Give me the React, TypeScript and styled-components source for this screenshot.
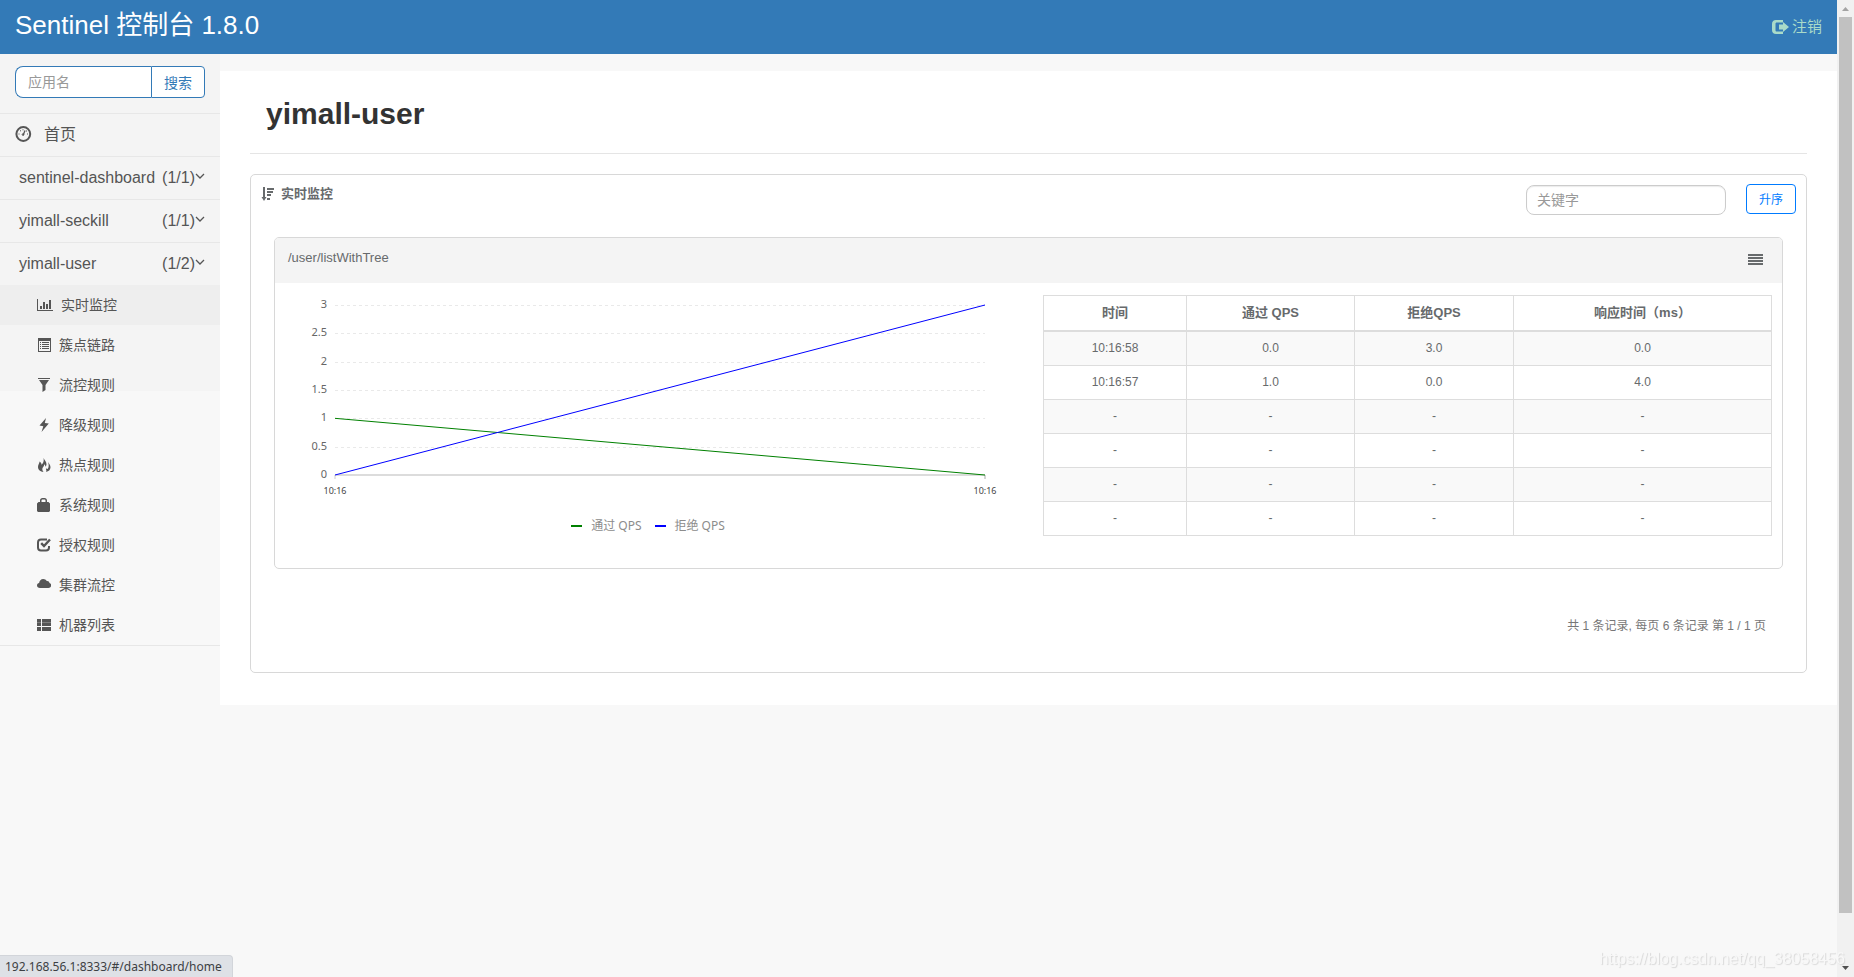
import React from 'react';
import styled, { createGlobalStyle } from 'styled-components';

const GlobalStyle = createGlobalStyle`
  *, *::before, *::after { box-sizing: border-box; }
  body {
    margin: 0;
    background: #f8f8f8;
    color: #676a6c;
    font-family: "Liberation Sans", "Noto Sans CJK SC", sans-serif;
    font-size: 14px;
  }
  button, input { font-family: inherit; }
  a { color: inherit; text-decoration: none; }
  ul { list-style: none; margin: 0; padding: 0; }
`;

const Shell = styled.div`
  display: flex;
  min-height: 100vh;
`;

const Page = styled.div`
  flex: 1;
  min-width: 0;
`;

const TopBar = styled.header`
  display: flex;
  justify-content: space-between;
  align-items: flex-start;
  height: 54px;
  padding: 0 15px;
  background: #337ab7;
`;

const Brand = styled.a`
  color: #fff;
  font-size: 26px;
  line-height: 50px;
`;

const Logout = styled.a`
  display: flex;
  align-items: center;
  gap: 3px;
  color: #a9dbc9;
  font-size: 15px;
  line-height: 54px;
`;

const Columns = styled.div`
  display: flex;
  align-items: flex-start;
`;

const Sidebar = styled.nav`
  width: 220px;
  flex: none;
  color: #555;
  background: linear-gradient(#f4f4f4 337px, #f8f8f8 337px);
`;

const SearchForm = styled.form`
  display: flex;
  padding: 12px 15px 15px;
  border-bottom: 1px solid #e7e7e7;
`;

const SearchInput = styled.input`
  flex: 1;
  min-width: 0;
  height: 32px;
  padding: 0 12px;
  border: 1px solid #337ab7;
  border-right: 0;
  border-radius: 8px 0 0 8px;
  background: #fff;
  font-size: 14px;
  outline: none;
  &::placeholder { color: #999; }
`;

const SearchButton = styled.button`
  width: 54px;
  height: 32px;
  padding: 0;
  border: 1px solid #337ab7;
  border-radius: 0 4px 4px 0;
  background: #fff;
  color: #337ab7;
  font-size: 14px;
`;

const NavItem = styled.li`
  border-bottom: 1px solid #e7e7e7;
`;

const HomeLink = styled.a`
  display: flex;
  align-items: center;
  gap: 12px;
  height: 42px;
  padding: 0 15px 2px;
  font-size: 16px;
`;

const NavLabel = styled.span`
  padding-bottom: 2px;
`;

const AppLink = styled.a`
  display: flex;
  align-items: center;
  height: 42px;
  padding: 0 15px 0 19px;
  font-size: 16px;
`;

const AppCount = styled.span`
  margin-left: auto;
`;

const RuleLink = styled.a<{ $active?: boolean }>`
  display: flex;
  align-items: center;
  gap: 8px;
  height: 40px;
  padding-left: 37px;
  font-size: 14px;
  background: ${p => (p.$active ? '#eee' : 'transparent')};
`;

const Content = styled.main`
  flex: 1;
  min-width: 0;
  margin-top: 17px;
  padding: 22px 30px 32px;
  background: #fff;
`;

const Title = styled.h1`
  margin: 0 0 20px;
  padding: 0 16px 18px;
  border-bottom: 1px solid #e5e5e5;
  color: #333;
  font-size: 30px;
  line-height: 42px;
`;

const Card = styled.section`
  border: 1px solid #d8d8d8;
  border-radius: 5px;
`;

const CardHead = styled.div`
  display: flex;
  align-items: flex-start;
  gap: 20px;
  padding: 9px 10px 0;
`;

const CardTitle = styled.h2`
  display: flex;
  align-items: center;
  gap: 7px;
  margin: 0 auto 0 0;
  font-size: 13px;
  line-height: 20px;
`;

const KeywordInput = styled.input`
  width: 200px;
  height: 30px;
  margin-top: 1px;
  padding: 0 10px;
  border: 1px solid #ccc;
  border-radius: 8px;
  box-shadow: inset 0 1px 1px rgba(0, 0, 0, 0.08);
  font-size: 14px;
  outline: none;
  &::placeholder { color: #999; }
`;

const SortButton = styled.button`
  width: 50px;
  height: 30px;
  padding: 0 0 2px;
  border: 1px solid #007bff;
  border-radius: 4px;
  background: #fff;
  color: #007bff;
  font-size: 12px;
`;

const Resource = styled.section`
  margin: 22px 23px 0;
  border: 1px solid #d8d8d8;
  border-radius: 5px;
`;

const ResourceHead = styled.div`
  display: flex;
  justify-content: space-between;
  height: 45px;
  padding: 10px 19px 0 13px;
  border-radius: 4px 4px 0 0;
  background: #f4f4f4;
  font-size: 13px;
  line-height: 20px;
`;

const MenuButton = styled.button`
  display: flex;
  align-items: center;
  height: 22px;
  padding: 0;
  border: 0;
  background: none;
  color: inherit;
`;

const ResourceBody = styled.div`
  display: flex;
  align-items: flex-start;
  padding: 12px 10px 32px;
`;

const Chart = styled.figure`
  flex: 1;
  min-width: 0;
  margin: 0;
  padding: 10px 32px 0 0;
`;

const PlotArea = styled.div`
  padding: 0 26px 0 50px;
`;

const Plot = styled.svg`
  display: block;
  width: 100%;
  height: 205px;
  overflow: visible;
  font-family: "Noto Sans", sans-serif;
`;

const Legend = styled.figcaption`
  display: flex;
  justify-content: center;
  gap: 13px;
  margin-top: 8px;
  color: #8c8c8c;
  font-family: "Noto Sans", "Noto Sans CJK SC", sans-serif;
  font-size: 12px;
  line-height: 16px;
`;

const LegendItem = styled.span`
  display: flex;
  align-items: center;
  gap: 9px;
`;

const LegendMark = styled.i<{ $color: string }>`
  width: 11px;
  height: 2px;
  background: ${p => p.$color};
`;

const Metrics = styled.table`
  width: 49%;
  table-layout: fixed;
  border-collapse: collapse;
  font-size: 12px;
  text-align: center;
  th, td {
    padding: 8px;
    border: 1px solid #ddd;
    line-height: 17px;
  }
  th {
    border-bottom-width: 2px;
    font-size: 13px;
    line-height: 18px;
  }
  tbody tr:nth-child(odd) { background: #f9f9f9; }
`;

const Pager = styled.p`
  margin: 47px 40px 36px;
  color: #777;
  font-size: 12px;
  line-height: 20px;
  text-align: right;
`;

const ScrollTrack = styled.div`
  display: flex;
  flex-direction: column;
  align-items: center;
  width: 17px;
  background: #f1f1f1;
`;

const ScrollArrow = styled.svg`
  flex: none;
  width: 17px;
  height: 17px;
`;

const ScrollThumb = styled.div`
  flex: 95;
  width: 13px;
  background: #c1c1c1;
`;

const ScrollRest = styled.div`
  flex: 5;
`;

const StatusBubble = styled.div`
  position: fixed;
  left: 0;
  bottom: 0;
  height: 22px;
  padding: 0 10px 0 5px;
  border: 1px solid #d2d5da;
  border-width: 1px 1px 0 0;
  border-radius: 0 4px 0 0;
  background: #dee1e6;
  color: #3c4043;
  font-family: "Noto Sans", sans-serif;
  font-size: 12px;
  line-height: 22px;
`;

const Watermark = styled.div`
  position: fixed;
  right: 9px;
  bottom: 8px;
  color: #f8f8f8;
  font-size: 16px;
  line-height: 20px;
  text-shadow: 1px 1px 1px #d8d8d8;
`;

const icons: Record<string, React.ReactNode> = {
  chart: (
    <path d="M0 1h1v11h15v1H0zM3 8h2v3H3zM6 4h2v7H6zM9 6h2v5H9zM12 2h2v9h-2z" />
  ),
  list: (
    <path
      fillRule="evenodd"
      d="M1 0h13v14H1zM2 3v10h11V3zM3 4h1v1H3zM5 4h7v1H5zM3 6h1v1H3zM5 6h7v1H5zM3 8h1v1H3zM5 8h7v1H5zM3 10h1v1H3zM5 10h7v1H5z"
    />
  ),
  filter: <path d="M1 0h12v1H1zM2 2h10L8.500 7v5L5.500 14V7z" />,
  flash: <path d="M9 0 2.500 7.500 6.300 8.200 4.500 14 11.800 5.600 7.800 5z" />,
  fire: (
    <path d="M6.500 0c.8 2 3.300 3.800 3 6.500-.1 1-.5 1.800-1 2.300-.1-1.200-.5-2-1.300-2.600.2 2.300-2.200 3-1.900 5.300.1 1 .5 1.800 1.200 2.500C3.500 13.800 1 12 1 9c0-2.200 1.300-3.300 1.600-5.500C3.900 4.300 4.600 5.300 4.500 6.800 6.300 5.300 7.200 3 6.500 0zM11 4c.6 1.500 2.600 2.800 2.500 5.300-.1 2.600-1.800 4.200-4.500 4.700 1.200-1.500-.5-2.600 0-4.300.3 1 .9 1.300 1.500 1.300C12 9.500 12 6.500 11 4z" />
  ),
  lock: (
    <path
      fillRule="evenodd"
      d="M3 4V2.500C3 1 4 0 5.500 0h2C9 0 10 1 10 2.500V4h1.500L13 5.500V13l-1 1H1l-1-1V5.500L1.500 4zM4.500 4h4V2.500c0-.6-.4-1-1-1h-2c-.6 0-1 .4-1 1z"
    />
  ),
  check: (
    <g fill="none" stroke="currentColor" strokeWidth="2">
      <path d="M10 1.500H4C2.300 1.500 1 2.800 1 4.500v5C1 11.200 2.300 12.500 4 12.500h5c1.700 0 3-1.300 3-3V8" />
      <path d="M4.200 5.200 7 8l6-6.500" strokeWidth="2.400" />
    </g>
  ),
  cloud: (
    <path d="M3 10C1.200 10 0 9 0 7.500 0 6.200.9 5.300 2.100 5.100 2.300 2.800 4 1 6.200 1c1.600 0 2.900.8 3.600 2.100 1.500-.2 2.500.7 2.700 1.900 1 .3 1.700 1.200 1.700 2.300 0 1.500-1.200 2.700-2.700 2.700z" />
  ),
  table: (
    <>
      <path d="M0 1h4v3H0zM5 1h9v3H5zM0 5h4v3H0zM5 5h9v3H5zM0 9h4v4H0zM5 9h9v4H5z" />
      <path d="M0 4h4v1H0zM5 4h9v1H5z" opacity=".75" />
    </>
  ),
};

function RuleIcon({ name }: { name: string }) {
  const width = name === 'chart' ? 16 : 14;
  return (
    <svg width={width} height="14" viewBox={`0 0 ${width} 14`} fill="currentColor" aria-hidden="true">
      {icons[name]}
    </svg>
  );
}

function DashboardIcon() {
  return (
    <svg width="17" height="16" viewBox="0 0 17 16" fill="none" stroke="currentColor" aria-hidden="true">
      <circle cx="8.300" cy="8" r="6.900" strokeWidth="2" />
      <path d="M8 9.500 10 4.500" strokeWidth="1.300" />
      <path d="M3.500 8h1M12 8h1M5 4.800h1M7.500 3.800h1M11 5h1" />
      <circle cx="8" cy="8.500" r=".8" />
    </svg>
  );
}

function ChevronIcon() {
  return (
    <svg width="10" height="16" viewBox="0 0 10 16" fill="none" stroke="currentColor" strokeWidth="1.300" aria-hidden="true">
      <path d="M1 4 5 8 9 4" />
    </svg>
  );
}

function SortIcon() {
  return (
    <svg width="13" height="14" viewBox="0 0 13 14" fill="currentColor" aria-hidden="true">
      <path d="M2 0h2v10h1.500L3 14 .5 10H2zM6 1h7v2H6zM6 4h6v2H6zM6 7h4v2H6zM6 11h3v2H6z" />
    </svg>
  );
}

function LogoutIcon() {
  return (
    <svg width="17" height="14" viewBox="0 0 17 14" fill="currentColor" aria-hidden="true">
      <path d="M4 0h7v2.500H5C3.800 2.500 3.500 3 3.500 4v6c0 1 .3 1.500 1.500 1.500h6V14H4c-2.500 0-4-1.500-4-4V4c0-2.500 1.500-4 4-4z" />
      <path d="M11 2l6 5-6 5V9.500H7v-5h4z" />
    </svg>
  );
}

const apps = [
  { name: 'sentinel-dashboard', count: '(1/1)' },
  { name: 'yimall-seckill', count: '(1/1)' },
  { name: 'yimall-user', count: '(1/2)', open: true },
];

const rules = [
  ['chart', '实时监控'],
  ['list', '簇点链路'],
  ['filter', '流控规则'],
  ['flash', '降级规则'],
  ['fire', '热点规则'],
  ['lock', '系统规则'],
  ['check', '授权规则'],
  ['cloud', '集群流控'],
  ['table', '机器列表'],
];

const rows = [
  ['10:16:58', '0.0', '3.0', '0.0'],
  ['10:16:57', '1.0', '0.0', '4.0'],
  ['-', '-', '-', '-'],
  ['-', '-', '-', '-'],
  ['-', '-', '-', '-'],
  ['-', '-', '-', '-'],
];

const ticks = ['3', '2.5', '2', '1.5', '1', '0.5', '0'];
const PLOT_HEIGHT = 170;
const yOf = (value: number) => PLOT_HEIGHT - (value / 3) * PLOT_HEIGHT;

function QpsChart() {
  return (
    <Chart>
      <PlotArea>
        <Plot role="img" aria-label="QPS">
          {ticks.map(t => (
            <g key={t}>
              {t !== '0' && (
                <line
                  x1="0"
                  x2="100%"
                  y1={Math.round(yOf(+t)) + 0.5}
                  y2={Math.round(yOf(+t)) + 0.5}
                  stroke="#e9e9e9"
                  strokeDasharray="3 3"
                />
              )}
              <text x="-8" y={yOf(+t) + 3} textAnchor="end" fontSize="11" fill="#666">
                {t}
              </text>
            </g>
          ))}
          <line x1="0" x2="100%" y1="170" y2="170" stroke="#dcdcdc" strokeWidth="2" />
          <line x1="0" x2="0" y1="170" y2="174" stroke="#ccc" />
          <line x1="100%" x2="100%" y1="170" y2="174" stroke="#aaa" />
          <line x1="0" x2="100%" y1={yOf(1)} y2={yOf(0)} stroke="green" />
          <line x1="0" x2="100%" y1={yOf(0)} y2={yOf(3)} stroke="blue" />
          <text x="0" y="189" textAnchor="middle" fontSize="9" fill="#444">10:16</text>
          <text x="100%" y="189" textAnchor="middle" fontSize="9" fill="#444">10:16</text>
        </Plot>
      </PlotArea>
      <Legend>
        <LegendItem><LegendMark $color="green" />通过 QPS</LegendItem>
        <LegendItem><LegendMark $color="blue" />拒绝 QPS</LegendItem>
      </Legend>
    </Chart>
  );
}

export default function App() {
  return (
    <>
      <GlobalStyle />
      <Shell>
        <Page>
          <TopBar>
            <Brand href="#/dashboard/home">Sentinel 控制台 1.8.0</Brand>
            <Logout href="#/logout"><LogoutIcon />注销</Logout>
          </TopBar>
          <Columns>
            <Sidebar>
              <SearchForm onSubmit={e => e.preventDefault()}>
                <SearchInput type="text" placeholder="应用名" aria-label="应用名" />
                <SearchButton type="submit">搜索</SearchButton>
              </SearchForm>
              <ul>
                <NavItem>
                  <HomeLink href="#/dashboard/home">
                    <DashboardIcon />
                    <NavLabel>首页</NavLabel>
                  </HomeLink>
                </NavItem>
                {apps.map(app => (
                  <NavItem key={app.name}>
                    <AppLink href={`#/app/${app.name}`}>
                      {app.name}
                      <AppCount>{app.count}</AppCount>
                      <ChevronIcon />
                    </AppLink>
                    {app.open && (
                      <ul>
                        {rules.map(([icon, label], i) => (
                          <li key={label}>
                            <RuleLink href={`#/${icon}`} $active={i === 0}>
                              <RuleIcon name={icon} />
                              <NavLabel>{label}</NavLabel>
                            </RuleLink>
                          </li>
                        ))}
                      </ul>
                    )}
                  </NavItem>
                ))}
              </ul>
            </Sidebar>
            <Content>
              <Title>yimall-user</Title>
              <Card>
                <CardHead>
                  <CardTitle><SortIcon />实时监控</CardTitle>
                  <KeywordInput type="text" placeholder="关键字" aria-label="关键字" />
                  <SortButton type="button">升序</SortButton>
                </CardHead>
                <Resource>
                  <ResourceHead>
                    <span>/user/listWithTree</span>
                    <MenuButton type="button" aria-label="menu">
                      <svg width="15" height="11" fill="currentColor">
                        <path d="M0 0h15v2H0zM0 3h15v2H0zM0 6h15v2H0zM0 9h15v2H0z" />
                      </svg>
                    </MenuButton>
                  </ResourceHead>
                  <ResourceBody>
                    <QpsChart />
                    <Metrics>
                      <colgroup>
                        <col width="143" />
                        <col width="168" />
                        <col width="159" />
                        <col width="258" />
                      </colgroup>
                      <thead>
                        <tr>
                          <th>时间</th>
                          <th>通过 QPS</th>
                          <th>拒绝QPS</th>
                          <th>响应时间（ms）</th>
                        </tr>
                      </thead>
                      <tbody>
                        {rows.map((row, i) => (
                          <tr key={i}>
                            {row.map((cell, j) => <td key={j}>{cell}</td>)}
                          </tr>
                        ))}
                      </tbody>
                    </Metrics>
                  </ResourceBody>
                </Resource>
                <Pager>共 1 条记录, 每页 6 条记录 第 1 / 1 页</Pager>
              </Card>
            </Content>
          </Columns>
        </Page>
        <ScrollTrack aria-hidden="true">
          <ScrollArrow viewBox="0 0 17 17"><path d="M5 11h7L8.500 7z" fill="#a3a3a3" /></ScrollArrow>
          <ScrollThumb />
          <ScrollRest />
          <ScrollArrow viewBox="0 0 17 17"><path d="M5 6h7l-3.500 4z" fill="#505050" /></ScrollArrow>
        </ScrollTrack>
      </Shell>
      <StatusBubble>192.168.56.1:8333/#/dashboard/home</StatusBubble>
      <Watermark>https://blog.csdn.net/qq_38058456</Watermark>
    </>
  );
}
